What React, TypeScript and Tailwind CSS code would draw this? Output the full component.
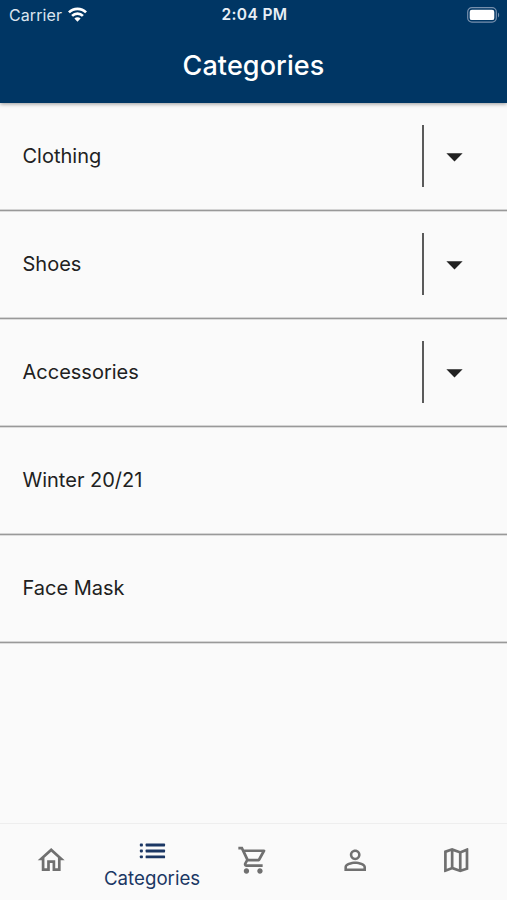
import { useState } from 'react';
import {
  MdArrowDropDown,
  MdOutlineHome,
  MdOutlineMap,
  MdOutlineShoppingCart,
  MdPersonOutline,
} from 'react-icons/md';

const WifiIcon = () => (
  <svg width="19" height="15" viewBox="0 0 20 15" fill="none" stroke="white" strokeWidth="2.8">
    <path d="M1 5.3a12.7 12.7 0 0 1 18 0" />
    <path d="M4.3 8.9a8 8 0 0 1 11.4 0" />
    <path d="M10 15 6.7 11.7a4.6 4.6 0 0 1 6.6 0z" fill="white" stroke="none" />
  </svg>
);

const BatteryIcon = () => (
  <svg width="33" height="16" viewBox="0 0 33 16" fill="none">
    <rect x="0.7" y="0.7" width="28.6" height="14.4" rx="4.2" stroke="#7790ad" strokeWidth="1.2" />
    <rect x="2.7" y="2.7" width="24.6" height="10.4" rx="2.2" fill="white" />
    <path d="M31 5.5c1.6.8 1.6 4.1 0 4.9z" fill="#7790ad" />
  </svg>
);

const ListIcon = ({ size }: { size: number }) => (
  <svg width={size} height={size} viewBox="0 0 32 32" fill="currentColor">
    <rect x="3.8" y="8.5" width="3" height="2.8" rx="0.8" />
    <rect x="3.8" y="14.4" width="3" height="2.8" rx="0.8" />
    <rect x="3.8" y="20.2" width="3" height="2.8" rx="0.8" />
    <rect x="9.5" y="8.5" width="19.2" height="2.8" rx="0.6" />
    <rect x="9.5" y="14.4" width="19.2" height="2.8" rx="0.6" />
    <rect x="9.5" y="20.2" width="19.2" height="2.8" rx="0.6" />
  </svg>
);

const categories = [
  { name: 'Clothing', expandable: true },
  { name: 'Shoes', expandable: true },
  { name: 'Accessories', expandable: true },
  { name: 'Winter 20/21', expandable: false },
  { name: 'Face Mask', expandable: false },
];

const tabs = [
  { name: 'Home', icon: MdOutlineHome },
  { name: 'Categories', icon: ListIcon },
  { name: 'Cart', icon: MdOutlineShoppingCart },
  { name: 'Account', icon: MdPersonOutline },
  { name: 'Stores', icon: MdOutlineMap },
];

export default function App() {
  const [active, setActive] = useState('Categories');

  return (
    <div className="flex h-screen w-full flex-col overflow-hidden bg-[#fafafa] font-['Inter',sans-serif] text-[#212121]">
      <header className="z-10 h-[103px] shrink-0 bg-[#003664] text-white shadow-[0_1px_4px_rgba(0,0,0,0.4)]">
        <div className="grid h-[29px] grid-cols-3 items-center pl-[9px] pr-[7px]">
          <div className="flex items-center gap-[6px]">
            <span className="text-[16px] leading-none tracking-[0.1px] text-[#dbe5ef]">Carrier</span>
            <WifiIcon />
          </div>
          <span className="text-center text-[15.5px] font-semibold leading-none tracking-[0.4px] text-[#e8eff6]">
            2:04 PM
          </span>
          <div className="flex justify-end">
            <BatteryIcon />
          </div>
        </div>
        <h1 className="flex h-[74px] items-center justify-center text-[27px] font-medium tracking-[0.1px]">
          Categories
        </h1>
      </header>

      <main className="flex-1">
        {categories.map((category) => (
          <div
            key={category.name}
            className="flex h-[108px] items-center justify-between border-b border-[#999999] pb-px pl-[22.5px] pr-[33px] shadow-[inset_0_-1px_0_#d4d4d4,0_1px_0_#dcdcdc]"
          >
            <span className="text-[20px]">{category.name}</span>
            {category.expandable && (
              <button className="flex items-center gap-[11px]" aria-label={`Expand ${category.name}`}>
                <span className="h-[62px] w-[2px] bg-[#5a5a5a]" />
                <MdArrowDropDown size={39} />
              </button>
            )}
          </div>
        ))}
      </main>

      <nav className="grid h-[77px] shrink-0 grid-cols-5 border-t border-[#eeeeee]">
        {tabs.map(({ name, icon: Icon }) => (
          <button
            key={name}
            onClick={() => setActive(name)}
            aria-label={name}
            className={`flex flex-col items-center ${active === name ? 'pt-[11px] text-[#1b3764]' : 'pt-[20px] text-[#707070]'}`}
          >
            <Icon size={32.4} />
            {active === name && <span className="text-[18.7px] leading-[23px]">{name}</span>}
          </button>
        ))}
      </nav>
    </div>
  );
}
